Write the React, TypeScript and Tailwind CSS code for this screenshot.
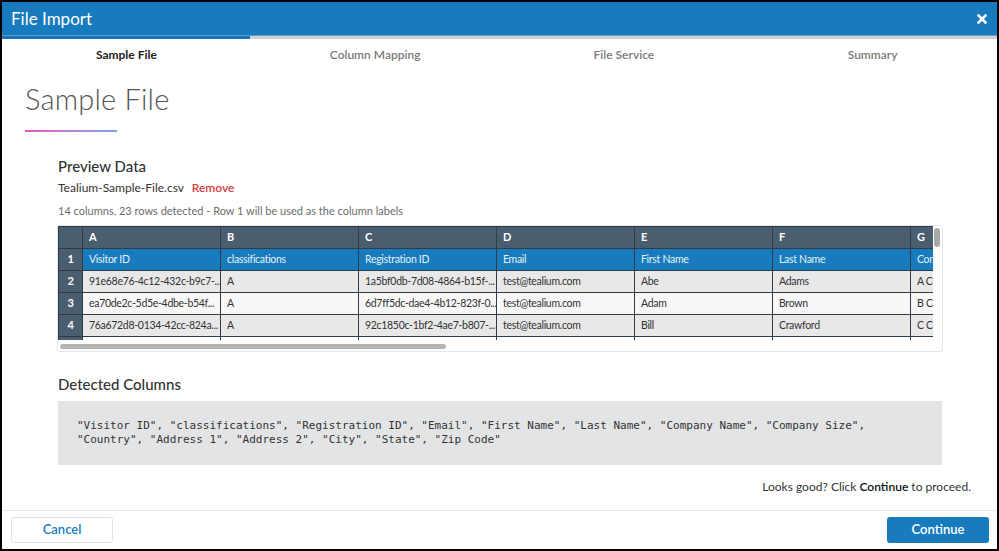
import React from "react";

const steps = ["Sample File", "Column Mapping", "File Service", "Summary"];

const letters = ["A", "B", "C", "D", "E", "F", "G", "H", "I", "J", "K", "L", "M", "N"];

const labels = [
  "Visitor ID",
  "classifications",
  "Registration ID",
  "Email",
  "First Name",
  "Last Name",
  "Company Name",
  "Company Size",
  "Country",
  "Address 1",
  "Address 2",
  "City",
  "State",
  "Zip Code",
];

// sample rows as they appear in the preview grid (already cut to cell width)
const rows = [
  ["91e68e76-4c12-432c-b9c7-...", "A", "1a5bf0db-7d08-4864-b15f-...", "test@tealium.com", "Abe", "Adams", "A Company", "10", "USA", "1 Main St", "", "San Diego", "CA", "92121"],
  ["ea70de2c-5d5e-4dbe-b54f...", "A", "6d7ff5dc-dae4-4b12-823f-0...", "test@tealium.com", "Adam", "Brown", "B Company", "50", "USA", "2 Main St", "", "San Diego", "CA", "92121"],
  ["76a672d8-0134-42cc-824a...", "A", "92c1850c-1bf2-4ae7-b807-...", "test@tealium.com", "Bill", "Crawford", "C Company", "100", "USA", "3 Main St", "", "San Diego", "CA", "92121"],
  ["", "", "", "", "", "", "", "", "", "", "", "", "", ""],
];

const rowBg = ["bg-[#e8e8e8]", "bg-[#f7f7f7]", "bg-[#e8e8e8]", "bg-white"];

export default function App() {
  return (
    <div className="w-[999px] h-[551px] bg-black p-[2px] font-['Lato','Liberation_Sans',sans-serif]">
      <div className="w-full h-full bg-white flex flex-col overflow-hidden">
        {/* Header */}
        <div className="h-[33px] shrink-0 bg-[#177bbd] flex items-center justify-between pl-[9px] pr-[10px]">
          <span className="text-white text-[17px] leading-none">File Import</span>
          <svg width="10" height="10" viewBox="0 0 10 10">
            <path d="M1.5 1.5 L8.5 8.5 M8.5 1.5 L1.5 8.5" stroke="white" strokeWidth="2.6" strokeLinecap="square" />
          </svg>
        </div>
        <div className="h-[1px] shrink-0 bg-[#5a9fd0]" />
        {/* Progress */}
        <div className="h-[3px] shrink-0 flex bg-[#d0d0d0]">
          <div className="w-[248px] bg-[#1474bc]" />
        </div>

        {/* Steps */}
        <div className="grid grid-cols-4 h-[31px] shrink-0 items-center">
          {steps.map((s, i) => (
            <div
              key={s}
              className={`text-center text-[12px] ${i === 0 ? "font-bold text-[#222]" : "font-semibold text-[#7a7a7a]"}`}
            >
              {s}
            </div>
          ))}
        </div>

        {/* Body */}
        <div className="flex-1 flex flex-col pl-[23px] pr-[26px]">
          <h1 className="mt-[12px] text-[29px] leading-[34px] font-light text-[#555] tracking-[0.2px]">Sample File</h1>
          <div className="mt-[14px] w-[92px] h-[2px] bg-gradient-to-r from-[#ec4dc3] to-[#6ea3ec]" />

          <div className="pl-[33px] pr-[30px] mt-[25px] flex flex-col">
            <h2 className="text-[15px] leading-[18px] text-[#333] font-medium">Preview Data</h2>
            <div className="mt-[5px] text-[12px] leading-[16px] text-[#333]">
              Tealium-Sample-File.csv <span className="ml-[5px] text-[#d83a44] font-semibold">Remove</span>
            </div>
            <div className="mt-[8px] text-[11px] leading-[14px] text-[#6b6b6b]">
              14 columns, 23 rows detected - Row 1 will be used as the column labels
            </div>

            {/* Grid preview */}
            <div className="mt-[7px] -ml-[1px] w-[886px] h-[127px] border border-[#e3e7ec] rounded-[3px] flex flex-col">
              <div className="flex h-[114px]">
                <div className="w-[875px] overflow-hidden">
                  <table className="border-collapse table-fixed text-[10.5px] tracking-[-0.3px] text-[#333]" style={{ width: 24 + 14 * 138 }}>
                    <colgroup>
                      <col style={{ width: 24 }} />
                      {letters.map((l) => (
                        <col key={l} style={{ width: 138 }} />
                      ))}
                    </colgroup>
                    <tbody>
                      <tr className="h-[22px] bg-[#4b5e70]">
                        <td className="border border-[#2f3b47]" />
                        {letters.map((l) => (
                          <td key={l} className="border border-[#2f3b47] pl-[6px] text-white font-bold text-[11px]">
                            {l}
                          </td>
                        ))}
                      </tr>
                      <tr className="h-[22px]">
                        <td className="border border-[#2f3b47] bg-[#4b5e70] text-white font-bold text-center text-[11px]">1</td>
                        {labels.map((l) => (
                          <td key={l} className="border border-[#2f3b47] bg-[#177bbd] pl-[6px] text-[#e6f1fa] whitespace-nowrap overflow-hidden">
                            {l}
                          </td>
                        ))}
                      </tr>
                      {rows.map((r, i) => (
                        <tr key={i} className={`h-[22px] ${rowBg[i]}`}>
                          <td className="border border-[#2f3b47] bg-[#4b5e70] text-white font-bold text-center text-[11px]">{i + 2}</td>
                          {r.map((c, j) => (
                            <td key={j} className="border border-[#2f3b47] pl-[6px] whitespace-nowrap overflow-hidden">
                              {c}
                            </td>
                          ))}
                        </tr>
                      ))}
                    </tbody>
                  </table>
                </div>
                <div className="flex-1 pt-[2px] pl-[1px] pr-[2px]">
                  <div className="h-[19px] w-[6px] rounded-full bg-[#a8a8a8]" />
                </div>
              </div>
              <div className="pl-[2px] pt-[4px]">
                <div className="w-[386px] h-[5px] rounded-full bg-[#b4b4b4]" />
              </div>
            </div>

            <h2 className="mt-[23px] text-[15px] leading-[18px] text-[#333] font-medium">Detected Columns</h2>
            <div className="mt-[8px] w-[884px] h-[64px] bg-[#e3e4e6] pl-[19px] pt-[18px] font-['DejaVu_Sans_Mono','Liberation_Mono',monospace] text-[11px] leading-[14px] text-[#333]">
              "Visitor ID", "classifications", "Registration ID", "Email", "First Name", "Last Name", "Company Name", "Company Size",
              <br />
              "Country", "Address 1", "Address 2", "City", "State", "Zip Code"
            </div>
          </div>

          <div className="mt-[14px] text-right text-[12px] leading-[15px] text-[#333]">
            Looks good? Click <span className="font-semibold text-[#111]">Continue</span> to proceed.
          </div>
        </div>

        {/* Footer */}
        <div className="h-[39px] shrink-0 border-t border-[#e4e4e4] flex items-center justify-between pl-[9px] pr-[8px]">
          <button className="w-[102px] h-[26px] border border-[#dde3ea] rounded-[3px] bg-white text-[#1b7bc4] text-[13px] font-semibold">
            Cancel
          </button>
          <button className="w-[102px] h-[26px] rounded-[3px] bg-[#177bbd] text-white text-[13px] font-semibold">
            Continue
          </button>
        </div>
      </div>
    </div>
  );
}
